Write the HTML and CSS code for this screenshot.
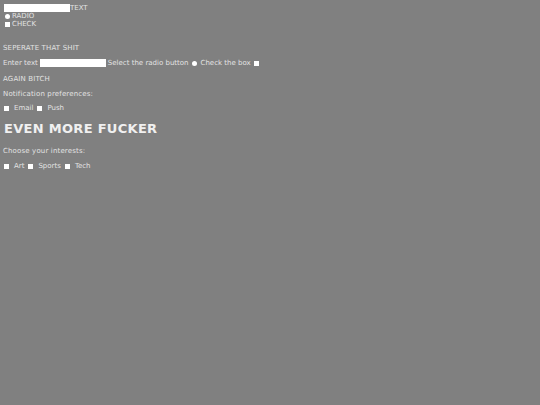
FILE: index.html
```html
<!DOCTYPE html>
<html>
<head>
<meta charset="utf-8">
<link rel="stylesheet" href="styles.css">
</head>
<body>
<div class="top">
  <div class="line"><span class="field w66"></span><span>TEXT</span></div>
  <div class="line"><span class="radio"></span><span>RADIO</span></div>
  <div class="line"><span class="check"></span><span>CHECK</span></div>
</div>
<p class="label sep">SEPERATE THAT SHIT</p>
<div class="row form">
  <span>Enter text</span><span class="field w66"></span>
  <span>Select the radio button</span><span class="radio"></span>
  <span>Check the box</span><span class="check"></span>
</div>
<p class="label again">AGAIN BITCH</p>
<p class="label note">Notification preferences:</p>
<div class="row opts">
  <span class="check"></span><span>Email</span>
  <span class="check"></span><span>Push</span>
</div>
<h1 class="big">EVEN MORE FUCKER</h1>
<p class="label choose">Choose your interests:</p>
<div class="row opts last">
  <span class="check"></span><span>Art</span>
  <span class="check"></span><span>Sports</span>
  <span class="check"></span><span>Tech</span>
</div>
</body>
</html>
```
FILE: styles.css
```css
html, body {
  margin: 0;
  background: #808080;
}
body {
  padding: 4px 3px;
  font-family: "DejaVu Sans", Verdana, sans-serif;
  font-size: 7px;
  color: #e2e2e2;
}
.top {
  display: flex;
  flex-direction: column;
  padding-left: 1px;
}
.line {
  display: flex;
  align-items: center;
  height: 8px;
}
.field {
  display: inline-block;
  background: #fff;
  height: 8px;
}
.w66 { width: 66px; }
.radio {
  display: inline-block;
  width: 5px;
  height: 5px;
  border-radius: 50%;
  background: #fff;
  margin: 0 2px 0 1px;
}
.check {
  display: inline-block;
  width: 5px;
  height: 5px;
  background: #fff;
  margin: 0 2px 0 1px;
}
.label {
  margin: 0;
  letter-spacing: 0.15px;
}
.sep { margin-top: 16px; }
.row {
  display: flex;
  align-items: center;
  gap: 3px;
  margin-top: 7px;
}
.form { gap: 2px; }
.again { margin-top: 8px; }
.note { margin-top: 7px; }
.opts { margin-top: 6px; gap: 3px; }
.last { margin-top: 7px; }
.big {
  margin: 9px 0 0 1px;
  font-size: 13px;
  font-weight: bold;
  color: #f0f0f0;
  letter-spacing: 0.3px;
}
.choose { margin-top: 11px; }
```
